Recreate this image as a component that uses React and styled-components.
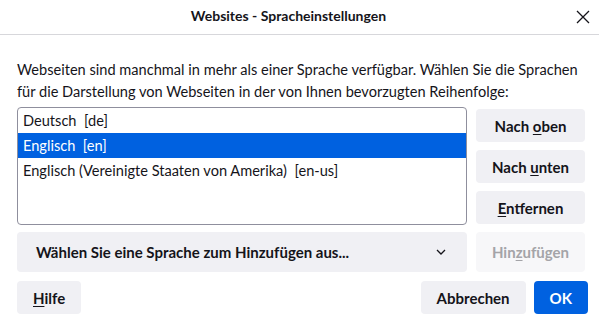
import React, { useState } from 'react'
import styled, { createGlobalStyle } from 'styled-components'

const GlobalStyle = createGlobalStyle`
  html, body {
    margin: 0;
    padding: 0;
    background: #ffffff;
  }
  body {
    font-family: Lato, 'Open Sans', sans-serif;
    color: #15141a;
  }
`

const languages = [
  { name: 'Deutsch', code: 'de' },
  { name: 'Englisch', code: 'en' },
  { name: 'Englisch (Vereinigte Staaten von Amerika)', code: 'en-us' },
]

const App = () => {
  const [selected, setSelected] = useState(1)

  return (
    <>
      <GlobalStyle />
      <Dialog>
        <TitleBar>
          <Title>Websites - Spracheinstellungen</Title>
          <CloseButton aria-label="Schließen">
            <svg width="14" height="14" viewBox="0 0 14 14">
              <path d="M1 1 L13 13 M13 1 L1 13" stroke="#15141a" strokeWidth="1.3" fill="none" />
            </svg>
          </CloseButton>
        </TitleBar>

        <Body>
          <Description>
            Webseiten sind manchmal in mehr als einer Sprache verfügbar. Wählen Sie die Sprachen
            <br />
            für die Darstellung von Webseiten in der von Ihnen bevorzugten Reihenfolge:
          </Description>

          <Grid>
            <LangList>
              {languages.map((lang, i) => (
                <LangItem key={lang.code} $active={i === selected} onClick={() => setSelected(i)}>
                  {lang.name}&nbsp;&nbsp;[{lang.code}]
                </LangItem>
              ))}
            </LangList>

            <SideButtons>
              <Button>Nach <u>o</u>ben</Button>
              <Button>Nach <u>u</u>nten</Button>
              <Button><u>E</u>ntfernen</Button>
            </SideButtons>

            <SelectBox>
              <span>Wählen Sie eine Sprache zum Hinzufügen aus...</span>
              <svg width="10" height="6" viewBox="0 0 10 6">
                <path d="M1 1 L5 5 L9 1" stroke="#15141a" strokeWidth="1.3" fill="none" />
              </svg>
            </SelectBox>

            <Button $tall disabled>Hin<u>z</u>ufügen</Button>
          </Grid>
        </Body>

        <Footer>
          <Button $wide><u>H</u>ilfe</Button>
          <FooterRight>
            <Button $wide>Abbrechen</Button>
            <Button $primary $wide>OK</Button>
          </FooterRight>
        </Footer>
      </Dialog>
    </>
  )
}

const Dialog = styled.div`
  width: 599px;
  height: 320px;
  background: #ffffff;
  display: flex;
  flex-direction: column;
  overflow: hidden;
`

const TitleBar = styled.div`
  position: relative;
  height: 34px;
  border-bottom: 1px solid #d7d7db;
  display: flex;
  align-items: center;
  justify-content: center;
  flex-shrink: 0;
`

const Title = styled.div`
  font-size: 14px;
  font-weight: 700;
  margin-left: -22px;
  margin-top: -3px;
`

const CloseButton = styled.button`
  position: absolute;
  right: 6px;
  top: 7px;
  width: 20px;
  height: 20px;
  border: none;
  background: transparent;
  padding: 0;
  display: flex;
  align-items: center;
  justify-content: center;
`

const Body = styled.div`
  padding: 24px 14px 0 17px;
`

const Description = styled.p`
  margin: 0 0 4px;
  font-size: 14.6px;
  line-height: 22px;
  white-space: nowrap;
`

const Grid = styled.div`
  display: grid;
  grid-template-columns: 450px 109px;
  column-gap: 9px;
  row-gap: 7px;
`

const LangList = styled.div`
  height: 116px;
  border: 1px solid #8f8f9d;
  border-radius: 4px;
  background: #ffffff;
  overflow: hidden;
`

const LangItem = styled.div`
  height: 25px;
  line-height: 25px;
  padding: 0 5px;
  font-size: 14.6px;
  white-space: nowrap;
  background: ${p => (p.$active ? '#0061e0' : 'transparent')};
  color: ${p => (p.$active ? '#ffffff' : '#15141a')};
  cursor: default;
`

const SideButtons = styled.div`
  display: flex;
  flex-direction: column;
  gap: 8px;
  padding-top: 2px;
`

const Button = styled.button`
  font-family: inherit;
  font-size: 15px;
  font-weight: 700;
  height: ${p => (p.$tall ? '40px' : '33px')};
  padding: ${p => (p.$wide ? '0 16px' : '0 8px')};
  border: none;
  border-radius: 4px;
  background: ${p => (p.$primary ? '#0061e0' : p.disabled ? '#f7f7f9' : '#f0f0f4')};
  color: ${p => (p.$primary ? '#ffffff' : p.disabled ? '#a4a4a8' : '#15141a')};
  cursor: default;
  white-space: nowrap;

  u {
    text-underline-offset: 2px;
  }
`

const SelectBox = styled.div`
  height: 40px;
  border-radius: 4px;
  background: #f0f0f4;
  display: flex;
  align-items: center;
  justify-content: space-between;
  padding: 0 21px 0 19px;
  font-size: 15px;
  font-weight: 700;
`

const Footer = styled.div`
  display: flex;
  justify-content: space-between;
  align-items: center;
  padding: 9px 11px 0 17px;
`

const FooterRight = styled.div`
  display: flex;
  gap: 8px;
`

export default App
